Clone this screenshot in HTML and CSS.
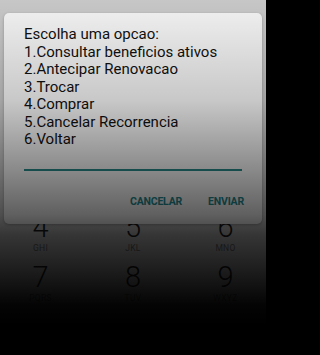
FILE: index.html
```html
<!DOCTYPE html>
<html lang="pt">
<head>
<meta charset="utf-8">
<link rel="stylesheet" href="styles.css">
</head>
<body>
<div class="screen">
  <div class="keypad">
    <div class="key"><span class="digit">4</span><span class="letters">GHI</span></div>
    <div class="key"><span class="digit">5</span><span class="letters">JKL</span></div>
    <div class="key"><span class="digit">6</span><span class="letters">MNO</span></div>
    <div class="key"><span class="digit">7</span><span class="letters">PQRS</span></div>
    <div class="key"><span class="digit">8</span><span class="letters">TUV</span></div>
    <div class="key"><span class="digit">9</span><span class="letters">WXYZ</span></div>
  </div>

  <div class="dialog">
    <div class="message">
      <div>Escolha uma opcao:</div>
      <div>1.Consultar beneficios ativos</div>
      <div>2.Antecipar Renovacao</div>
      <div>3.Trocar</div>
      <div>4.Comprar</div>
      <div>5.Cancelar Recorrencia</div>
      <div>6.Voltar</div>
    </div>
    <div class="field"></div>
    <div class="actions">
      <span class="btn">CANCELAR</span>
      <span class="btn">ENVIAR</span>
    </div>
  </div>

  <div class="scrim"></div>
</div>
</body>
</html>
```

FILE: styles.css
```css
html, body {
  margin: 0;
  padding: 0;
  background: #000;
}

body {
  font-family: Roboto, "Noto Sans", "Liberation Sans", sans-serif;
}

.screen {
  position: relative;
  width: 266px;
  height: 355px;
  overflow: hidden;
  background: #cdcdcd;
}

.keypad {
  display: grid;
  grid-template-columns: repeat(3, 92.5px);
  justify-content: center;
  padding-top: 214px;
}

.key {
  display: flex;
  flex-direction: column;
  align-items: center;
  height: 50px;
}

.digit {
  font-size: 29px;
  line-height: 27px;
  font-weight: 300;
  color: #1c1c1c;
}

.letters {
  margin-top: 2px;
  font-size: 8.5px;
  line-height: 10px;
  color: #6e6e6e;
  letter-spacing: 0.3px;
}

.dialog {
  position: absolute;
  left: 4px;
  top: 13px;
  width: 258px;
  height: 211px;
  box-sizing: border-box;
  background: #fafafa;
  border-radius: 5px;
  padding: 13px 20px 0 20px;
  box-shadow: 0 1px 3px rgba(0, 0, 0, 0.25);
  display: flex;
  flex-direction: column;
}

.message {
  font-size: 15px;
  line-height: 17.5px;
  color: #111;
}

.field {
  margin-top: 20px;
  height: 2px;
  background: #2a8a8c;
}

.actions {
  display: flex;
  justify-content: flex-end;
  gap: 26px;
  margin-top: 24px;
  margin-right: -2px;
}

.btn {
  font-size: 10.5px;
  line-height: 14px;
  font-weight: 700;
  letter-spacing: -0.2px;
  color: #23898e;
}

.scrim {
  position: absolute;
  inset: 0;
  pointer-events: none;
  background: linear-gradient(
    to bottom,
    rgba(0, 0, 0, 0.03) 0px,
    rgba(0, 0, 0, 0.2) 100px,
    rgba(0, 0, 0, 0.45) 170px,
    rgba(0, 0, 0, 0.62) 215px,
    rgba(0, 0, 0, 0.74) 235px,
    rgba(0, 0, 0, 0.86) 270px,
    rgba(0, 0, 0, 0.98) 305px,
    rgba(0, 0, 0, 1) 325px
  );
}
```
